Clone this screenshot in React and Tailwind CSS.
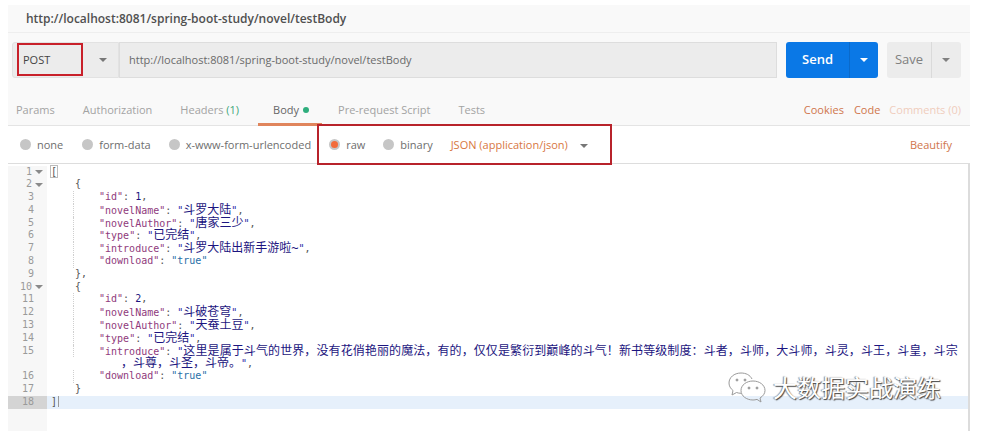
const UI = "font-['Open_Sans','Noto_Sans',sans-serif]";
const MONO = "font-['DejaVu_Sans_Mono','Noto_Sans_CJK_SC',monospace]";

function Caret({ className }) {
  return <span className={"w-0 h-0 border-x-[4px] border-x-transparent border-t-[4px] " + className} />;
}

function Radio({ label, selected, className }) {
  return (
    <div className={"flex items-center " + className}>
      <span className="w-[11px] h-[11px] rounded-full bg-[#c6c6c6] flex items-center justify-center -mt-[3px]">
        {selected && <span className="w-[7px] h-[7px] rounded-full bg-[#f26b3a]" />}
      </span>
      <span className="ml-[6px] text-[11px] text-[#6e6e6e]">{label}</span>
    </div>
  );
}

// key in magenta, then a value that is either latin or cjk text
function Key({ name }) {
  return <span className="text-[#8f3a7c]">"{name}"</span>;
}

function Str({ children }) {
  return (
    <span className="text-[#2a2aa8]">
      "<span className="text-[12px] text-[#1c1580]">{children}</span>"
    </span>
  );
}

function Line({ num, fold, indent, active, guide, children }) {
  return (
    <div className={"flex h-[12.8px] leading-[12.8px] " + (active ? "bg-[#e6f0fb]" : "")}>
      <div className={"w-[39px] shrink-0 flex items-center pr-[4px] text-[10px] text-[#9a9a9a] " + (active ? "bg-[#d4d4d4]" : "bg-[#f7f7f7]")}>
        <span className="w-[26px] text-right">{num}</span>
        {fold && <Caret className="ml-[3px] border-t-[#8a8a8a]" />}
      </div>
      <div className={"relative whitespace-pre text-[10px] text-[#555] " + indent}>
        {guide && <span className="absolute left-[26px] top-0 h-full border-l border-dotted border-[#cfcfcf]" />}
        {children}
      </div>
    </div>
  );
}

function Field({ num, name, children, comma = true }) {
  return (
    <Line num={num} indent="pl-[52px]" guide>
      <Key name={name} />: {children}{comma && ","}
    </Line>
  );
}

export default function App() {
  return (
    <div className={"relative w-[994px] h-[440px] bg-white pt-[5px] pl-[8px] " + UI}>
      <div className="w-[962px]">
        <div className="h-[27px] bg-[#f9f9f9] pl-[18px] flex items-center text-[12px] font-semibold text-[#505050]">
          http://localhost:8081/spring-boot-study/novel/testBody
        </div>
        <div className="h-[56px] bg-[#f9f9f9] border-t border-[#eeeeee] pl-[4px] pt-[9px] flex">
          <div className="w-[107px] h-[36px] bg-[#ececec] border border-[#e2e2e2] rounded-l-[3px] flex items-center pl-[10px] text-[11px] text-[#444]">
            <span className="w-[76px]">POST</span>
            <Caret className="border-t-[#777]" />
          </div>
          <div className="w-[658px] h-[36px] bg-[#ececec] border border-[#dddddd] flex items-center pl-[9px] text-[11px] text-[#6a6a6a]">
            http://localhost:8081/spring-boot-study/novel/testBody
          </div>
          <div className="ml-[9px] w-[92px] h-[36px] bg-[#0a78e6] rounded-[3px] flex items-center text-white">
            <span className="w-[64px] h-full flex items-center justify-center text-[13px] font-semibold border-r border-[#0a6acb]">Send</span>
            <Caret className="ml-[10px] border-t-white" />
          </div>
          <div className="ml-[9px] w-[74px] h-[36px] bg-[#ececec] rounded-[3px] flex items-center text-[#808080]">
            <span className="w-[45px] h-full flex items-center justify-center text-[13px] border-r border-[#dadada]">Save</span>
            <Caret className="ml-[10px] border-t-[#808080]" />
          </div>
        </div>
        <div className="h-[38px] bg-[#f9f9f9] border-b border-[#e4e4e4] flex items-center pt-[7px] pl-[8px] pr-[9px] text-[11px] text-[#a3a3a3]">
          <span>Params</span>
          <span className="ml-[28px]">Authorization</span>
          <span className="ml-[28px]">Headers <span className="text-[#3fa77a]">(1)</span></span>
          <div className="relative ml-[34px] h-full flex items-center text-[#666]">
            Body
            <span className="ml-[4px] w-[6px] h-[6px] rounded-full bg-[#2fae7d]" />
            <span className="absolute -left-[15px] -right-[13px] bottom-[-1px] h-[3px] bg-[#e0855c]" />
          </div>
          <span className="ml-[29px]">Pre-request Script</span>
          <span className="ml-[28px]">Tests</span>
          <span className="ml-auto text-[#d0764c]">Cookies</span>
          <span className="ml-[10px] text-[#d0764c]">Code</span>
          <span className="ml-[9px] text-[#f0cdbd]">Comments (0)</span>
        </div>
        <div className="h-[38px] bg-white border-b border-[#dddddd] flex items-center pt-[2px] pl-[12px] pr-[18px]">
          <Radio label="none" className="ml-[0px]" />
          <Radio label="form-data" className="ml-[19px]" />
          <Radio label="x-www-form-urlencoded" className="ml-[18px]" />
          <Radio label="raw" selected className="ml-[18px]" />
          <Radio label="binary" className="ml-[18px]" />
          <span className="ml-[18px] text-[11px] text-[#d8773f]">JSON (application/json)</span>
          <Caret className="ml-[12px] border-t-[#777]" />
          <span className="ml-auto text-[11px] text-[#d0764c]">Beautify</span>
        </div>
        <div className={"h-[267px] pt-[1.5px] border-r-2 border-[#dcdcdc] bg-white flex flex-col " + MONO}>
          <Line num="1" fold indent="pl-[4px]"><span className="outline outline-[#bbb]">[</span></Line>
          <Line num="2" fold indent="pl-[28px]">{"{"}</Line>
          <Field num="3" name="id"><span className="text-[#1c1580]">1</span></Field>
          <Field num="4" name="novelName"><Str>斗罗大陆</Str></Field>
          <Field num="5" name="novelAuthor"><Str>唐家三少</Str></Field>
          <Field num="6" name="type"><Str>已完结</Str></Field>
          <Field num="7" name="introduce"><Str>斗罗大陆出新手游啦~</Str></Field>
          <Field num="8" name="download" comma={false}><span className="text-[#2a6fa8]">"true"</span></Field>
          <Line num="9" indent="pl-[28px]">{"},"}</Line>
          <Line num="10" fold indent="pl-[28px]">{"{"}</Line>
          <Field num="11" name="id"><span className="text-[#1c1580]">2</span></Field>
          <Field num="12" name="novelName"><Str>斗破苍穹</Str></Field>
          <Field num="13" name="novelAuthor"><Str>天蚕土豆</Str></Field>
          <Field num="14" name="type"><Str>已完结</Str></Field>
          <Field num="15" name="introduce" comma={false}>
            <span className="text-[#2a2aa8]">"<span className="text-[12px] tracking-[0.1px] text-[#1c1580]">这里是属于斗气的世界，没有花俏艳丽的魔法，有的，仅仅是繁衍到巅峰的斗气！新书等级制度：斗者，斗师，大斗师，斗灵，斗王，斗皇，斗宗</span></span>
          </Field>
          <Line indent="pl-[74px]">
            <span className="text-[12px] text-[#1c1580]">，斗尊，斗圣，斗帝。</span><span className="text-[#2a2aa8]">"</span>,
          </Line>
          <Field num="16" name="download" comma={false}><span className="text-[#2a6fa8]">"true"</span></Field>
          <Line num="17" indent="pl-[28px]">{"}"}</Line>
          <Line num="18" active indent="pl-[4px] w-full">{"]"}<span className="border-l border-[#999] ml-[1px]" /></Line>
          <div className="w-[39px] flex-1 bg-[#f7f7f7]" />
        </div>
      </div>

      {/* red annotation boxes drawn over the screenshot */}
      <div className="absolute left-[17px] top-[43px] w-[66px] h-[33px] border-2 border-[#c8202a]" />
      <div className="absolute left-[317px] top-[124px] w-[295px] h-[41px] border-2 border-[#b8232b]" />

      {/* watermark */}
      <div className="absolute left-[728px] top-[371px] flex items-center">
        <svg width="38" height="32" viewBox="0 0 38 32" fill="none" stroke="#9a9a9a" strokeWidth="1">
          <path d="M24 8C22 4 18 2 13 2 6 2 1 6.500 1 12c0 3 1.500 5.500 4 7.500L4 24l4.500-2.500c1.500.5 3 .8 4.500.8" />
          <path d="M25 10c-6.500 0-12 4-12 9.500S18.500 29 25 29c1.500 0 2.500-.2 4-.6L33 31l-1-4c3-1.800 5-4.500 5-7.500C37 14 31.500 10 25 10z" />
          <circle cx="9" cy="9" r="1" fill="#9a9a9a" />
          <circle cx="17" cy="9" r="1" fill="#9a9a9a" />
          <circle cx="21" cy="17" r="1" fill="#9a9a9a" />
          <circle cx="29" cy="17" r="1" fill="#9a9a9a" />
        </svg>
        <span className="ml-[7px] text-[24px] leading-[32px] text-white [text-shadow:1px_1px_1px_#444,-1px_0_1px_#888] font-['Noto_Sans_CJK_SC',sans-serif]">大数据实战演练</span>
      </div>
    </div>
  );
}
